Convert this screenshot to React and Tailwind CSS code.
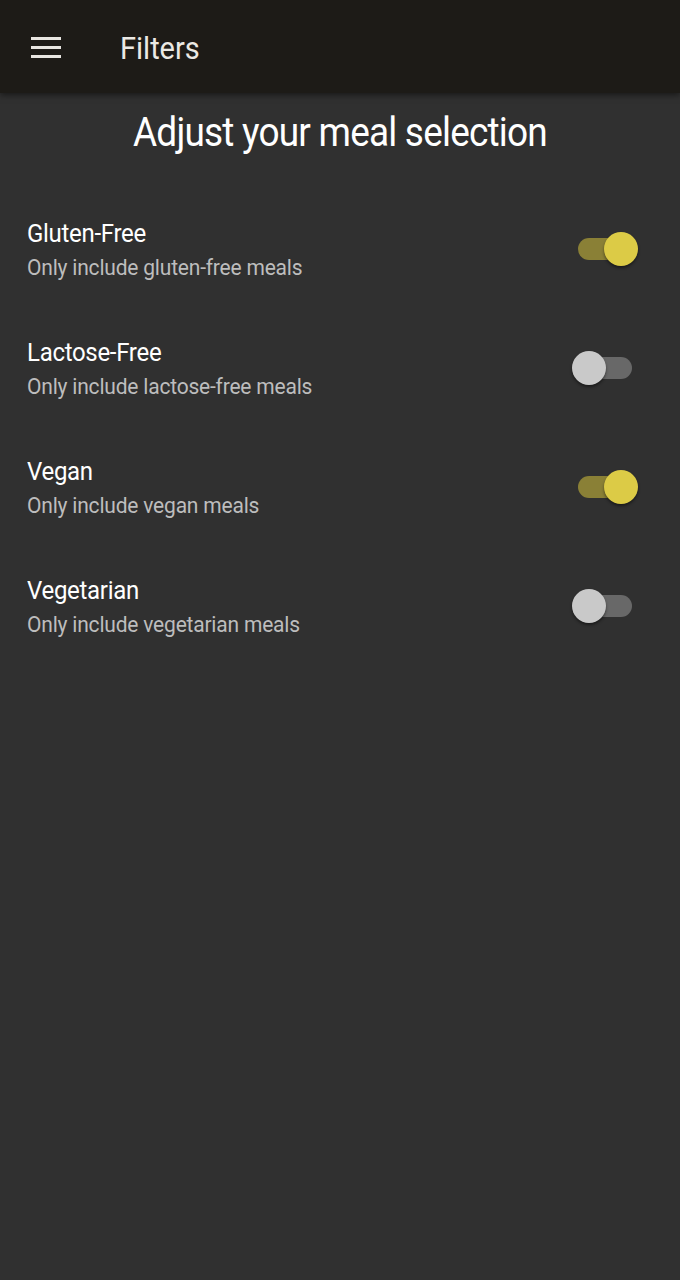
import React from "react";

const items = [
  { title: "Gluten-Free", sub: "Only include gluten-free meals", on: true },
  { title: "Lactose-Free", sub: "Only include lactose-free meals", on: false },
  { title: "Vegan", sub: "Only include vegan meals", on: true },
  { title: "Vegetarian", sub: "Only include vegetarian meals", on: false },
];

function Switch({ on }) {
  return (
    <div className="relative w-[66px] h-[34px] flex items-center -mt-[2px]">
      <div
        className={
          "absolute left-[6px] w-[54px] h-[22px] rounded-full " +
          (on ? "bg-[#8a8036]" : "bg-[#686868]")
        }
      />
      <div
        className={
          "absolute top-0 w-[34px] h-[34px] rounded-full shadow-[0_2px_3px_rgba(0,0,0,0.45)] " +
          (on ? "left-[32px] bg-[#dccb46]" : "left-0 bg-[#c9c9c9]")
        }
      />
    </div>
  );
}

export default function App() {
  return (
    <div
      className="w-[680px] h-[1280px] bg-[#303030] flex flex-col"
      style={{ fontFamily: "Roboto, 'Liberation Sans', sans-serif" }}
    >
      <div className="h-[93px] bg-[#1d1b17] flex items-center shrink-0 shadow-[0_2px_6px_rgba(0,0,0,0.5)] relative z-10">
        <div className="ml-[31px] w-[30px] flex flex-col gap-[6px] mt-[1px]">
          <div className="h-[3px] bg-[#e8e6e1]" />
          <div className="h-[3px] bg-[#e8e6e1]" />
          <div className="h-[3px] bg-[#e8e6e1]" />
        </div>
        <div className="ml-[59px] text-[29px] text-[#ebe9e4] tracking-[0px] mt-[4px] scale-y-[1.08]">Filters</div>
      </div>
      <div className="text-center text-white text-[37px] tracking-[-0.8px] mt-[17px] leading-[46px] scale-y-[1.08]">
        Adjust your meal selection
      </div>
      <div className="mt-[34px] flex flex-col">
        {items.map((it) => (
          <div key={it.title} className="flex items-center justify-between pl-[27px] pr-[42px] h-[119px]">
            <div className="flex flex-col">
              <div className="text-[24px] leading-[34px] text-white tracking-[-0.3px] scale-y-[1.08] origin-left">{it.title}</div>
              <div className="text-[21px] leading-[34px] text-[#bdbdbd] tracking-[-0.2px] scale-y-[1.08] origin-left">{it.sub}</div>
            </div>
            <Switch on={it.on} />
          </div>
        ))}
      </div>
    </div>
  );
}
